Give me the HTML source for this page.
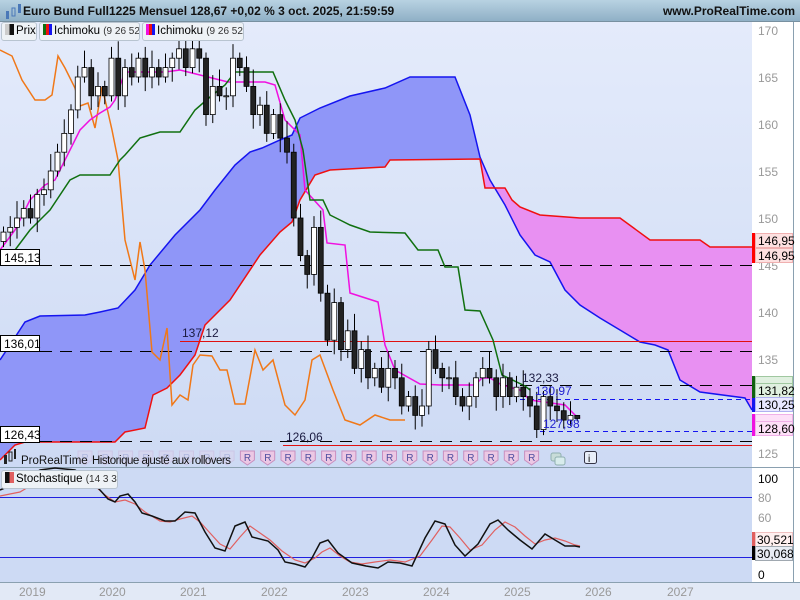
<!DOCTYPE html>
<html><head><meta charset="utf-8"><style>
body{margin:0;width:800px;height:600px;overflow:hidden;font-family:"Liberation Sans",sans-serif;background:#fff}
#hdr{position:absolute;left:0;top:0;width:800px;height:21px;background:linear-gradient(#b8d2e2,#8fb0c6);border-bottom:1px solid #7890a0}
#hdr .t{position:absolute;left:23px;top:4px;font-size:12px;font-weight:bold;color:#111}
#hdr .u{position:absolute;right:5px;top:4px;font-size:12px;font-weight:bold;color:#111}
svg{position:absolute;left:0;top:0}
.tab{position:absolute;top:22px;height:17px;background:#eef2f6;border:1px solid #b8c4d0;border-radius:3px;font-size:11.5px;color:#000;line-height:17px;white-space:nowrap;overflow:hidden}
.tab i{display:inline-block;width:9px;height:11px;vertical-align:-1px;margin:0 2px 0 3px}
.tab span{font-size:10px;color:#333}
</style></head><body>
<svg id="s" width="800" height="600" xmlns="http://www.w3.org/2000/svg">
<defs>
<linearGradient id="bg" x1="0" y1="0" x2="0" y2="1"><stop offset="0" stop-color="#e4ebfb"/><stop offset="1" stop-color="#cddaf4"/></linearGradient>
</defs>
<rect x="0" y="21" width="752" height="446" fill="url(#bg)"/>
<rect x="752" y="21" width="48" height="561" fill="#fff"/>
<rect x="0" y="468" width="752" height="114" fill="#cddaf4"/>
<rect x="0" y="582" width="800" height="18" fill="#e2e9f6"/>
<line x1="0" y1="467.5" x2="800" y2="467.5" stroke="#8aa0b0"/>
<line x1="0" y1="582.5" x2="800" y2="582.5" stroke="#8aa0b0"/>
<line x1="793.5" y1="21" x2="793.5" y2="582" stroke="#8aa0b0"/>
<path d="M0,360 L10,345 L25,322 L40,316 L85,315 L100,312 L118,308 L135,290 L150,265 L175,235 L200,210 L215,190 L235,165 L250,152 L262,148 L280,140 L292,135 L300,118 L320,108 L350,96 L385,88 L410,77 L455,77 L470,115 L480,157 L480,159 L390,160 L385,167 L330,170 L315,175 L300,200 L292,222 L280,232 L260,255 L230,300 L205,325 L195,355 L180,375 L167,388 L153,395 L145,428 L125,432 L115,442 L25,442 L15,445 L0,460 Z" fill="#8f96f8"/>
<path d="M480,159 L485,188 L505,188 L512,200 L520,207 L540,215 L580,218 L620,218 L650,240 L700,240 L710,247 L752,247 L752,410 L745,398 L700,392 L680,380 L668,350 L655,345 L640,342 L620,330 L600,318 L580,305 L565,290 L550,262 L535,255 L520,235 L505,205 L490,180 Z" fill="#e890f2"/>
<polyline fill="none" stroke="#1515f0" stroke-width="1.5" points="0,360 10,345 25,322 40,316 85,315 100,312 118,308 135,290 150,265 175,235 200,210 215,190 235,165 250,152 262,148 280,140 292,135 300,118 320,108 350,96 385,88 410,77 455,77 470,115 480,157 490,180 505,205 520,235 535,255 550,262 565,290 580,305 600,318 620,330 640,342 655,345 668,350 680,380 700,392 745,398 752,410"/>
<polyline fill="none" stroke="#f01010" stroke-width="1.5" points="0,460 15,445 25,442 115,442 125,432 145,428 153,395 167,388 180,375 195,355 205,325 230,300 260,255 280,232 292,222 300,200 315,175 330,170 385,167 390,160 480,159 485,188 505,188 512,200 520,207 540,215 580,218 620,218 650,240 700,240 710,247 752,247"/>
<g stroke="#000" stroke-dasharray="12,8" fill="none">
<line x1="0" y1="265.5" x2="752" y2="265.5"/>
<line x1="0" y1="351.5" x2="752" y2="351.5"/>
<line x1="0" y1="441.5" x2="752" y2="441.5"/>
<line x1="500" y1="385.5" x2="752" y2="385.5"/>
</g>
<g stroke="#1515f0" stroke-dasharray="5,4" fill="none">
<line x1="520" y1="399.5" x2="752" y2="399.5"/>
<line x1="540" y1="431.5" x2="752" y2="431.5"/>
</g>
<line x1="180" y1="341.5" x2="752" y2="341.5" stroke="#e01010"/>
<line x1="283" y1="445.5" x2="752" y2="445.5" stroke="#e01010"/>
<polyline fill="none" stroke="#f07818" stroke-width="1.5" points="0,50 12,56 22,80 35,100 45,100 52,95 58,56 65,68 75,88 80,106 88,103 95,128 102,87 107,108 112,130 118,160 125,240 135,280 140,242 145,270 152,352 160,360 167,328 172,405 180,395 188,400 193,365 200,355 212,356 220,370 227,370 235,404 245,404 255,350 263,370 273,360 285,405 295,415 305,400 312,360 320,355 333,390 345,420 360,425 375,415 390,420 405,420"/>
<polyline fill="none" stroke="#f010e0" stroke-width="1.5" points="0,250 15,230 30,200 45,185 55,180 70,150 80,130 90,120 100,113 110,107 115,100 125,72 165,72 180,70 212,78 228,82 265,82 275,85 285,120 300,135 305,190 323,210 327,243 345,245 350,293 378,302 385,345 395,370 420,384 440,385 475,385 482,378 490,378 502,385 520,390 530,400 565,405 575,415 580,418"/>
<polyline fill="none" stroke="#107010" stroke-width="1.5" points="0,265 15,250 30,230 45,215 50,210 70,180 80,175 110,175 120,160 125,155 140,138 150,135 160,132 180,132 195,110 210,97 225,85 235,72 273,72 285,100 295,120 303,150 310,200 323,200 330,215 340,220 350,225 370,232 405,233 418,250 438,250 445,267 458,267 465,310 480,311 493,340 502,375 525,386 530,390"/>
<g id="candles"></g>
<g font-size="12" fill="#000">
<rect x="0.5" y="249.5" width="39" height="16" fill="#fff" stroke="#000"/><text x="4" y="262">145,13</text>
<rect x="0.5" y="335.5" width="39" height="16" fill="#fff" stroke="#000"/><text x="4" y="348">136,01</text>
<rect x="0.5" y="426.5" width="39" height="16" fill="#fff" stroke="#000"/><text x="4" y="439">126,43</text>
<text x="182" y="337" fill="#1a1a40">137,12</text>
<text x="286" y="441" fill="#1a1a40">126,06</text>
<text x="522" y="382" fill="#1a1a40">132,33</text>
<text x="535" y="395" fill="#2020d0">130,97</text>
<text x="543" y="428" fill="#2020d0">127,98</text>
</g>
<g font-size="12" fill="#999">
<text x="758" y="35">170</text><text x="758" y="82">165</text><text x="758" y="129">160</text><text x="758" y="176">155</text><text x="758" y="223">150</text><text x="758" y="270">145</text><text x="758" y="317">140</text><text x="758" y="364">135</text><text x="758" y="411">130</text><text x="758" y="458">125</text>
</g>
<g font-size="12" fill="#000">
<rect x="752" y="233" width="3" height="30" fill="#f00"/>
<rect x="755.5" y="233.5" width="37" height="14" fill="#fde0e0" stroke="#f0b0b0"/><text x="758" y="245">146,95</text>
<rect x="755.5" y="248.5" width="37" height="14" fill="#fde0e0" stroke="#f0b0b0"/><text x="758" y="260">146,95</text>
<rect x="752" y="376" width="3" height="22" fill="#106010"/>
<rect x="755.5" y="376.5" width="37" height="7" fill="#e0f0e0" stroke="#a0c8a0"/>
<rect x="755.5" y="383.5" width="37" height="14" fill="#e0f0e0" stroke="#a0c8a0"/><text x="758" y="395">131,82</text>
<rect x="752" y="398" width="3" height="14" fill="#1515f0"/>
<rect x="755.5" y="397.5" width="37" height="14" fill="#e8e8ff" stroke="#b0b0f0"/><text x="758" y="409">130,25</text>
<rect x="752" y="414" width="3" height="22" fill="#f010e0"/>
<rect x="755.5" y="414.5" width="37" height="7" fill="#fde0f8" stroke="#f0b0e8"/>
<rect x="755.5" y="421.5" width="37" height="14" fill="#fde0f8" stroke="#f0b0e8"/><text x="758" y="433">128,60</text>
</g>
<g id="badges"></g>
<g fill="#222"><rect x="4" y="455" width="3" height="9"/><rect x="9" y="452" width="3" height="9" fill="none" stroke="#222"/><rect x="14" y="449" width="2" height="10"/></g>
<text x="21" y="464" font-size="11.5" fill="#111">ProRealTime</text>
<text x="92" y="464" font-size="11.5" fill="#111" textLength="139">Historique ajusté aux rollovers</text>
<rect x="584.5" y="451.5" width="12" height="12" rx="2" fill="#e8eef8" stroke="#334"/><text x="588" y="462" font-size="10" fill="#000">i</text>
<rect x="551" y="453" width="10" height="8" rx="2" fill="#c8dcd8" stroke="#90b0b0"/><rect x="555" y="457" width="10" height="8" rx="2" fill="#d8ecec" stroke="#90b0b0"/>
<line x1="0" y1="497.5" x2="752" y2="497.5" stroke="#2020e0"/>
<line x1="0" y1="557.5" x2="752" y2="557.5" stroke="#2020e0"/>
<polyline fill="none" stroke="#e06060" stroke-width="1.2" points="0,496 10,494 20,492 30,486 45,478 60,476 80,478 95,486 105,495 115,502 125,500 135,504 145,512 160,521 170,522 180,519 192,516 200,522 210,533 220,544 230,549 240,537 250,526 260,533 270,540 282,551 295,560 305,563 315,558 322,552 330,548 340,556 350,562 362,564 375,562 390,560 405,562 420,556 432,540 442,526 450,527 460,538 470,550 482,545 495,530 505,522 515,527 525,536 535,544 545,540 555,538 565,541 575,545 580,546"/>
<polyline fill="none" stroke="#111" stroke-width="1.5" points="0,490 12,485 20,481 30,476 40,470 55,468 75,470 90,480 100,490 108,499 115,502 120,496 128,494 135,502 142,513 152,516 165,521 175,521 185,512 195,513 205,532 215,548 225,551 235,526 245,522 252,537 268,541 278,550 285,562 295,564 305,567 312,558 320,543 328,540 338,553 352,563 366,566 378,568 388,562 400,563 412,566 425,538 435,521 445,524 455,545 465,556 478,544 490,524 498,520 508,530 520,540 532,549 545,534 555,540 565,546 575,546 580,547"/>
<g font-size="12" fill="#000"><text x="758" y="483">100</text><text x="758" y="579">0</text></g>
<g font-size="12" fill="#999"><text x="758" y="502">80</text><text x="758" y="522">60</text></g>
<g font-size="12" fill="#000">
<rect x="752" y="532" width="3" height="14" fill="#e06060"/>
<rect x="755.5" y="532.5" width="37" height="14" fill="#fff0f0" stroke="#f0c0c0"/><text x="757" y="544">30,521</text>
<rect x="752" y="546" width="3" height="14" fill="#000"/>
<rect x="755.5" y="546.5" width="37" height="14" fill="#e8ecf4" stroke="#a0a8b0"/><text x="757" y="558">30,068</text>
</g>
<g font-size="12" fill="#999">
<text x="19" y="596">2019</text><text x="99" y="596">2020</text><text x="180" y="596">2021</text><text x="261" y="596">2022</text><text x="342" y="596">2023</text><text x="423" y="596">2024</text><text x="504" y="596">2025</text><text x="585" y="596">2026</text><text x="667" y="596">2027</text>
</g>
</svg>
<div id="hdr"><svg width="20" height="20" style="left:4px;top:2px"><rect x="2" y="9" width="3" height="8" fill="#4a78b8"/><rect x="8" y="6" width="3" height="8" fill="none" stroke="#4a78b8"/><rect x="14" y="2" width="3" height="9" fill="#4a78b8"/></svg><div class="t">Euro Bund Full1225 Mensuel 128,67 +0,02 % 3 oct. 2025, 21:59:59</div><div class="u">www.ProRealTime.com</div></div>
<div class="tab" style="left:1px;width:34px"><i style="background:linear-gradient(90deg,#ccc 50%,#111 50%)"></i>Prix</div>
<div class="tab" style="left:39px;width:99px"><i style="background:linear-gradient(90deg,#107010 33%,#f01010 33%,#f01010 66%,#1515f0 66%)"></i>Ichimoku&nbsp;<span>(9 26 52)</span></div>
<div class="tab" style="left:142px;width:100px"><i style="background:linear-gradient(90deg,#f010e0 33%,#f01010 33%,#f01010 66%,#1515f0 66%)"></i>Ichimoku&nbsp;<span>(9 26 52)</span></div>
<div class="tab" style="left:1px;top:470px;width:115px"><i style="background:linear-gradient(90deg,#111 50%,#e06060 50%)"></i>Stochastique&nbsp;<span>(14 3 3)</span></div>
<script>
var P=[148.5,149,150,151,150,152.5,153,155,157,159,161.5,165,166,163,164,163,167,163,166,165,167,165,166,165,166,167,168,166,168,167,161,164,163,163,167,166,164,161,162,159,161,158.5,157,150,146,144,149,142,137,141,136,138,134,136,133,134,132,134,133,130,131,129,130,136,134,133,133,131,130,131,133,134,133,131,133,131,132,131,130,127.5,131,130,129.5,128.5,129,128.67];
function Y(p){return 30+(170-p)*9.4}
var g='';var prev=147.5;
for(var i=0;i<P.length;i++){var x=3+6.75*i,o=prev,c=P[i];var hi=Math.max(o,c)+0.6+((i*7)%5)*0.3,lo=Math.min(o,c)-0.6-((i*3)%4)*0.3;
if(i==P.length-1){hi=c+0.3;lo=c-0.3;}
g+='<line x1="'+(x+.5)+'" y1="'+Y(hi)+'" x2="'+(x+.5)+'" y2="'+Y(lo)+'" stroke="#000"/>';
var t=Math.min(Y(o),Y(c)),h=Math.max(Math.abs(Y(o)-Y(c)),1);
g+='<rect x="'+(x-2)+'" y="'+t+'" width="5" height="'+h+'" fill="'+(c>=o?'#fff':'#222')+'" stroke="#000" stroke-width="0.8"/>';prev=c;}
document.getElementById('candles').innerHTML=g;
var b='';for(var k=0;k<23;k++){var bx=85+k*20.3;var op=bx<240?0.25:1;
b+='<g opacity="'+op+'"><path d="M'+(bx-7)+',451 h14 v9 l-7,5 l-7,-5 z" fill="#ecc8e4" stroke="#c890c0"/><text x="'+(bx-3.5)+'" y="461" font-size="10" fill="#5050a0">R</text></g>';}
document.getElementById('badges').innerHTML=b;
</script>
</body></html>
